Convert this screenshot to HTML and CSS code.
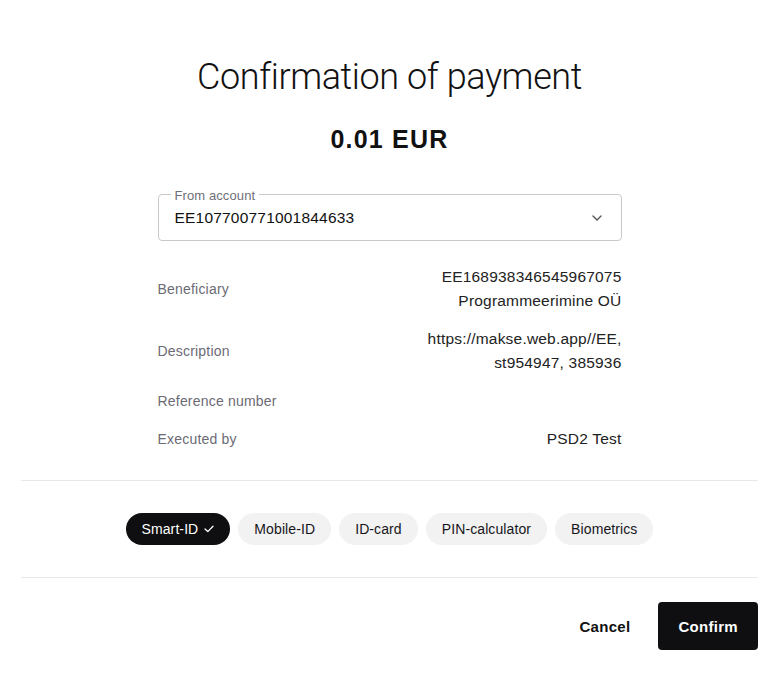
FILE: index.html
```html
<!DOCTYPE html>
<html lang="en">
<head>
<meta charset="utf-8">
<title>Confirmation of payment</title>
<link rel="stylesheet" href="styles.css">
</head>
<body>
<div class="page">
  <h1 class="title">Confirmation of payment</h1>
  <div class="amount">0.01 EUR</div>

  <div class="content">
    <div class="select">
      <span class="select-label">From account</span>
      <span class="select-value">EE107700771001844633</span>
      <svg class="chevron" width="12" height="8" viewBox="0 0 12 8"><path d="M2 2 L6 6 L10 2" fill="none" stroke="#555" stroke-width="1.4" stroke-linecap="round" stroke-linejoin="round"/></svg>
    </div>

    <div class="details">
      <div class="row">
        <div class="label">Beneficiary</div>
        <div class="value">EE168938346545967075<br>Programmeerimine OÜ</div>
      </div>
      <div class="row">
        <div class="label">Description</div>
        <div class="value">https://makse.web.app//EE,<br>st954947, 385936</div>
      </div>
      <div class="row">
        <div class="label">Reference number</div>
        <div class="value"></div>
      </div>
      <div class="row">
        <div class="label">Executed by</div>
        <div class="value">PSD2 Test</div>
      </div>
    </div>
  </div>

  <div class="methods">
    <button class="chip chip-active">Smart-ID
      <svg class="check" width="10" height="8" viewBox="0 0 10 8"><path d="M1 4 L3.8 6.6 L9 1.2" fill="none" stroke="#fff" stroke-width="1.3" stroke-linecap="round" stroke-linejoin="round"/></svg>
    </button>
    <button class="chip">Mobile-ID</button>
    <button class="chip">ID-card</button>
    <button class="chip">PIN-calculator</button>
    <button class="chip">Biometrics</button>
  </div>

  <div class="actions">
    <button class="btn btn-text">Cancel</button>
    <button class="btn btn-primary">Confirm</button>
  </div>
</div>
</body>
</html>
```
FILE: styles.css
```css
* { box-sizing: border-box; }
html, body { margin: 0; padding: 0; background: #fff; }
body {
  font-family: "Liberation Sans", Arial, sans-serif;
  color: #1c1c1e;
}
.page {
  width: 780px;
  padding: 55px 22px 25px 21px;
}
.title {
  margin: 0;
  text-align: center;
  font-family: Roboto, "Liberation Sans", sans-serif;
  font-weight: 300;
  font-size: 36px;
  line-height: 44px;
  color: #111;
  letter-spacing: -0.4px;
}
.amount {
  margin-top: 26px;
  text-align: center;
  font-weight: 700;
  font-size: 25px;
  line-height: 28px;
  letter-spacing: 1.2px;
  color: #111;
}
.content {
  width: 464px;
  margin: 41px auto 0;
}
.select {
  position: relative;
  height: 47px;
  border: 1px solid #c9c9cd;
  border-radius: 4px;
  display: flex;
  align-items: center;
  padding: 0 16px;
}
.select-label {
  position: absolute;
  top: -7px;
  left: 12px;
  padding: 0 4px;
  background: #fff;
  font-size: 13px;
  line-height: 16px;
  color: #6f6f78;
  letter-spacing: 0.1px;
}
.select-value {
  flex: 1;
  font-size: 15.5px;
  letter-spacing: 0.2px;
  color: #111;
  padding-top: 1px;
}
.chevron { margin-right: 2px; }
.details {
  margin-top: 17px;
}
.row {
  display: flex;
  justify-content: space-between;
  align-items: center;
  padding: 7px 0;
  min-height: 38px;
}
.label {
  font-size: 14px;
  color: #6b6b75;
  line-height: 24px;
  letter-spacing: 0.2px;
}
.value {
  text-align: right;
  font-size: 15.5px;
  letter-spacing: 0.2px;
  line-height: 24px;
  color: #222;
}
.methods {
  margin-top: 22px;
  border-top: 1px solid #e8e8ea;
  border-bottom: 1px solid #e8e8ea;
  padding: 32px 0;
  display: flex;
  justify-content: center;
  gap: 8px;
}
.chip {
  height: 32px;
  border: none;
  border-radius: 16px;
  padding: 0 16px;
  background: #f2f2f3;
  color: #16161a;
  font-family: "Liberation Sans", Arial, sans-serif;
  font-size: 14px;
  letter-spacing: 0.1px;
  display: inline-flex;
  align-items: center;
  gap: 6px;
}
.chip-active {
  background: #0f0f11;
  color: #fff;
}
.actions {
  margin-top: 24px;
  display: flex;
  justify-content: flex-end;
  gap: 8px;
}
.btn {
  height: 48px;
  padding: 0 20px;
  border: none;
  border-radius: 4px;
  font-family: "Liberation Sans", Arial, sans-serif;
  font-weight: 700;
  font-size: 15px;
  letter-spacing: 0.3px;
  cursor: pointer;
}
.btn-text { background: transparent; color: #111; }
.btn-primary { background: #0f0f11; color: #fff; }
```
